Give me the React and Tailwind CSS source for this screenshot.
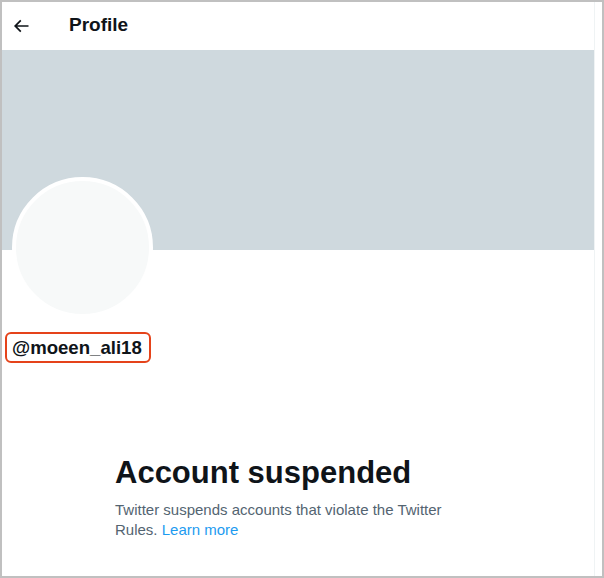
import React from "react";

const font = { fontFamily: '"Liberation Sans", Arial, sans-serif' };

const BackArrow = () => (
  <svg viewBox="0 0 24 24" className="w-5 h-5 fill-[#0f1419]">
    <path d="M7.414 13l5.043 5.04-1.414 1.42L3.586 12l7.457-7.46 1.414 1.42L7.414 11H21v2H7.414z" />
  </svg>
);

const App = () => {
  return (
    <div
      className="w-[604px] h-[578px] border-2 border-[#c0c0c0] bg-white flex overflow-hidden"
      style={font}
    >
      <div className="w-[593px] border-r border-[#eff3f4] flex flex-col">
        <div className="h-[48px] flex items-center pl-[9px]">
          <BackArrow />
          <h2 className="ml-[38px] text-[19px] font-bold text-[#0f1419] -mt-[2px]">
            Profile
          </h2>
        </div>

        <div className="h-[200px] bg-[#cfd9de]" />

        <div className="px-[10px]">
          <div className="-mt-[73px] w-[141px] h-[141px] rounded-full border-4 border-white bg-[#f7f9f9]" />
          <div className="mt-[14px] -ml-[7.5px] inline-flex h-[31px] items-center pl-[5.5px] pr-[7px] border-2 border-[#e5431a] rounded-md">
            <span className="text-[18.6px] font-bold text-[#0f1419]">@moeen_ali18</span>
          </div>
        </div>

        <div className="ml-[113px] mt-[92px] w-[350px]">
          <h1 className="text-[31px] leading-[36px] font-bold text-[#0f1419]">
            Account suspended
          </h1>
          <p className="mt-[9px] text-[15px] leading-[20px] text-[#536471]">
            Twitter suspends accounts that violate the Twitter Rules.{" "}
            <a href="#" className="text-[#1d9bf0]">
              Learn more
            </a>
          </p>
        </div>
      </div>
    </div>
  );
};

export default App;
